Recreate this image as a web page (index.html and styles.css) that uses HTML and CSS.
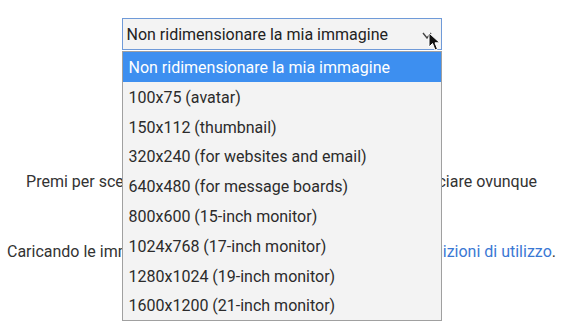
FILE: index.html
```html
<!DOCTYPE html>
<html lang="it">
<head>
  <meta charset="UTF-8">
  <meta name="viewport" content="width=device-width, initial-scale=1.0">
  <title>Carica immagini</title>
  <link rel="stylesheet" href="styles.css">
</head>
<body>
  <div class="picker">
    <div class="select">
      <span>Non ridimensionare la mia immagine</span>
      <svg class="chevron" width="10" height="7" viewBox="0 0 10 7"><path d="M1 1 L5 6 L9 1" fill="none" stroke="#444" stroke-width="1.4"/></svg>
    </div>
    <ul class="options">
      <li class="active">Non ridimensionare la mia immagine</li>
      <li>100x75 (avatar)</li>
      <li>150x112 (thumbnail)</li>
      <li>320x240 (for websites and email)</li>
      <li>640x480 (for message boards)</li>
      <li>800x600 (15-inch monitor)</li>
      <li>1024x768 (17-inch monitor)</li>
      <li>1280x1024 (19-inch monitor)</li>
      <li>1600x1200 (21-inch monitor)</li>
    </ul>
    <svg class="cursor" width="13" height="20" viewBox="0 0 13 20"><path d="M1 1 L1 15 L4.5 11.5 L7 18 L9.5 17 L7 10.8 L11.8 10.8 Z" fill="#111" stroke="#fff" stroke-width="1"/></svg>
  </div>

  <p class="hint">Premi per scegliere le immagini oppure trascinale per rilasciare ovunque</p>
  <p class="terms">Caricando le immagini dichiari di accettare i <a href="#">Termini e le condizioni di utilizzo</a>.</p>
</body>
</html>
```

FILE: styles.css
```css
html, body {
  min-height: 100vh;
}
body {
  margin: 0;
  font-family: Roboto, "Liberation Sans", Arial, sans-serif;
  font-size: 16px;
  color: #333;
  background: #fff;
}
.picker {
  position: relative;
  width: 320px;
  margin: 18px auto 0;
}
.select {
  box-sizing: border-box;
  height: 32px;
  display: flex;
  align-items: center;
  justify-content: space-between;
  padding: 1px 9px 0 4px;
  border: 1px solid #6f9ad8;
  background: #f3f3f3;
  color: #222;
}
.chevron {
  margin-top: 2px;
}
.options {
  position: absolute;
  top: 33px;
  left: 0;
  right: 0;
  margin: 0;
  padding: 0;
  list-style: none;
  background: #f3f3f3;
  border: 1px solid #a0a0a0;
  z-index: 2;
}
.options li {
  height: 29.8px;
  line-height: 31px;
  padding-left: 6px;
  color: #2b2b2b;
  white-space: nowrap;
}
.options li.active {
  background: #3d8ff0;
  color: #fff;
}
.cursor {
  position: absolute;
  top: 14px;
  left: 306px;
  z-index: 3;
}
.hint {
  margin: 120px 0 0;
  line-height: 24px;
  text-align: center;
}
.terms {
  margin: 46px 0 0;
  line-height: 24px;
  text-align: center;
  white-space: nowrap;
}
.terms a {
  color: #3a78d4;
  text-decoration: none;
}
```
